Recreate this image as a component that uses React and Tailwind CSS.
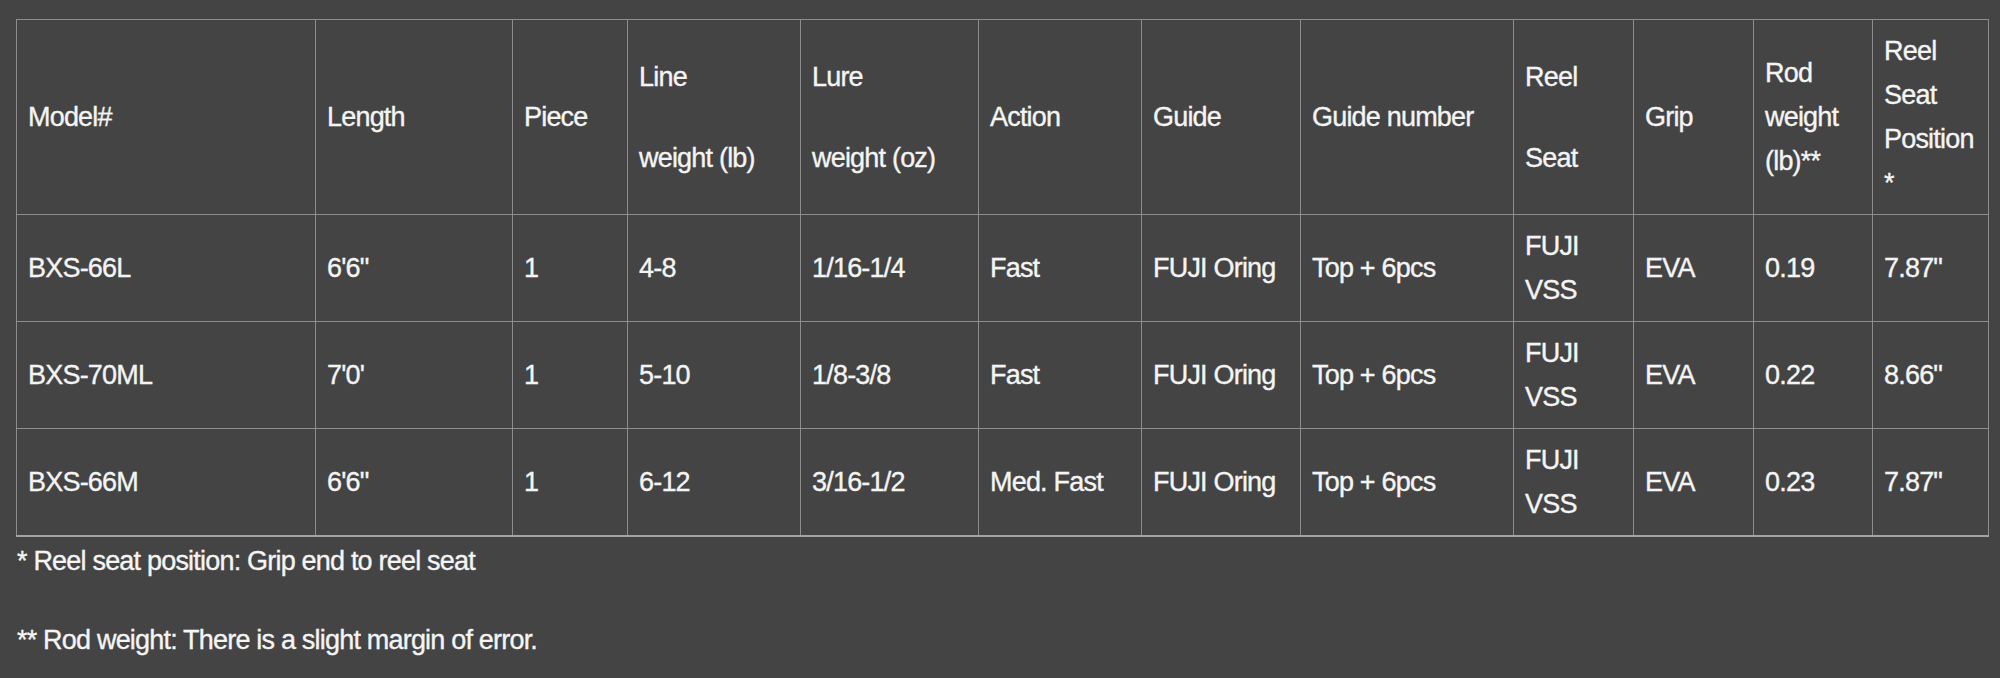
import React from "react";

const cols = [299, 197, 115, 173, 178, 163, 159, 213, 120, 120, 119, 116];

const rows = [
  ["BXS-66L", "6'6\"", "1", "4-8", "1/16-1/4", "Fast", "FUJI Oring", "Top + 6pcs", ["FUJI", "VSS"], "EVA", "0.19", "7.87\""],
  ["BXS-70ML", "7'0'", "1", "5-10", "1/8-3/8", "Fast", "FUJI Oring", "Top + 6pcs", ["FUJI", "VSS"], "EVA", "0.22", "8.66\""],
  ["BXS-66M", "6'6\"", "1", "6-12", "3/16-1/2", "Med. Fast", "FUJI Oring", "Top + 6pcs", ["FUJI", "VSS"], "EVA", "0.23", "7.87\""],
];

function Gap2({ a, b }) {
  return (
    <div className="flex flex-col gap-[37px]">
      <span>{a}</span>
      <span>{b}</span>
    </div>
  );
}

function Lines({ items }) {
  return (
    <div className="flex flex-col">
      {items.map((t, i) => (
        <span key={i}>{t}</span>
      ))}
    </div>
  );
}

export default function App() {
  const cell = "border border-[#8d8d8d] px-[11px] py-[9px] align-middle text-left font-normal whitespace-nowrap";
  const headers = [
    "Model#",
    "Length",
    "Piece",
    <Gap2 a="Line" b="weight (lb)" />,
    <Gap2 a="Lure" b="weight (oz)" />,
    "Action",
    "Guide",
    "Guide number",
    <Gap2 a="Reel" b="Seat" />,
    "Grip",
    <Lines items={["Rod", "weight", "(lb)**"]} />,
    <Lines items={["Reel", "Seat", "Position", "*"]} />,
  ];
  return (
    <div
      className="min-h-[678px] w-[2000px] bg-[#444444] text-[#f4f4f4] pt-[19px] pl-[16px] text-[27px] leading-[44px] tracking-[-0.8px] [-webkit-text-stroke:0.35px_#f4f4f4]"
      style={{ fontFamily: '"Liberation Sans", Arial, sans-serif' }}
    >
      <table className="table-fixed border-collapse w-[1972px] border-b-2 border-b-[#a3a3a3]">
        <colgroup>
          {cols.map((w, i) => (
            <col key={i} style={{ width: w }} />
          ))}
        </colgroup>
        <thead>
          <tr className="h-[194px]">
            {headers.map((h, i) => (
              <th key={i} className={cell}>
                {h}
              </th>
            ))}
          </tr>
        </thead>
        <tbody>
          {rows.map((r, ri) => (
            <tr key={ri} className="h-[107px]">
              {r.map((c, ci) => (
                <td key={ci} className={cell}>
                  {Array.isArray(c) ? <Lines items={c} /> : c}
                </td>
              ))}
            </tr>
          ))}
        </tbody>
      </table>
      <div className="pl-[1px] pt-[2px]">
        <p>* Reel seat position: Grip end to reel seat</p>
        <p className="mt-[35px]">** Rod weight: There is a slight margin of error.</p>
      </div>
    </div>
  );
}
